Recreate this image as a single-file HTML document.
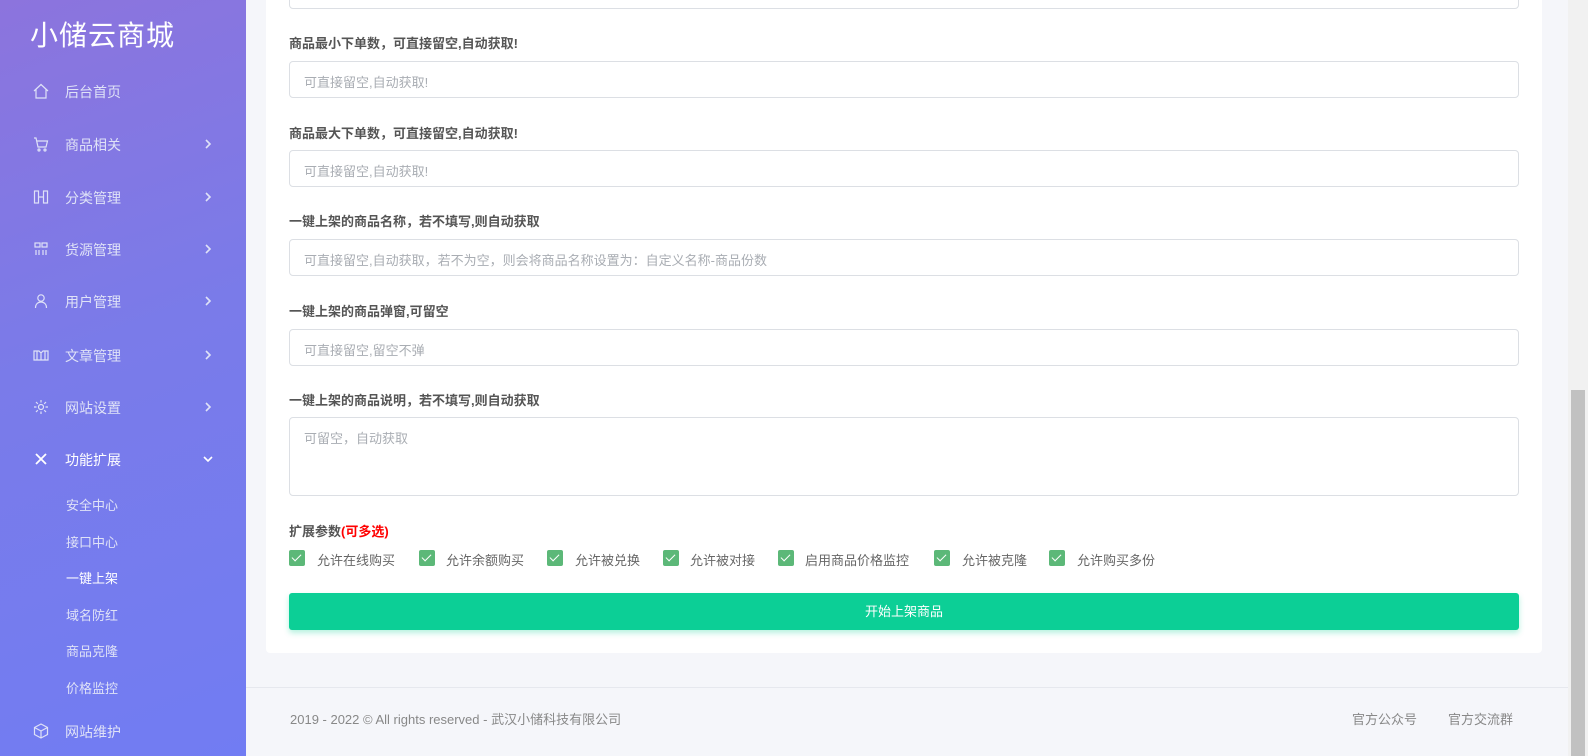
<!DOCTYPE html>
<html><head><meta charset="utf-8"><style>
*{box-sizing:border-box;margin:0;padding:0}
body{width:1588px;height:756px;overflow:hidden;font-family:"Liberation Sans","Noto Sans CJK SC",sans-serif;background:#f5f6fa;position:relative}
.side{position:absolute;left:0;top:0;width:246px;height:756px;background:linear-gradient(160deg,#8c74dd 0%,#7a7be9 45%,#717cf3 100%)}
.logo{position:absolute;left:30px;top:14px;font-size:28px;color:#fff;letter-spacing:1px}
.it{position:absolute;left:0;width:246px;height:20px;color:#dfe2f7;font-size:14px}
.it .ic{position:absolute;left:33px;top:2px;width:16px;height:16px}
.it .t{position:absolute;left:65px;top:1px}
.it .ar{position:absolute;left:202px;top:4px;width:12px;height:12px}
.sub{position:absolute;left:66px;font-size:13px;color:#dfe2f7}
.card{position:absolute;left:266px;top:-10px;width:1276px;height:663px;background:#fff;border-radius:4px}
.lbl{position:absolute;left:289px;font-size:13px;font-weight:bold;color:#555}
.inp{position:absolute;left:289px;width:1230px;height:37px;border:1px solid #dcdfe4;border-radius:4px;font-size:13px;color:#a9adb3;padding:10px 0 0 14px}
.cb{position:absolute;top:550px;width:16px;height:16px;background:#5cb878;border-radius:2px}
.cb::after{content:"";position:absolute;left:5px;top:2px;width:4px;height:8px;border:solid #fff;border-width:0 1.5px 1.5px 0;transform:rotate(45deg)}
.cbl{position:absolute;top:550px;font-size:13px;color:#666}
.btn{position:absolute;left:289px;top:593px;width:1230px;height:37px;background:#0ccf96;border-radius:3px;color:#fff;font-size:13px;text-align:center;line-height:37px;box-shadow:0 3px 6px rgba(12,207,150,.3)}
.foot{position:absolute;left:246px;top:687px;width:1322px;height:69px;border-top:1px solid #e6e8ee;font-size:13px;color:#888}
.scroll{position:absolute;left:1568px;top:0;width:20px;height:756px;background:#f1f1f1}
.thumb{position:absolute;left:1571px;top:390px;width:14px;height:366px;background:#c1c1c1}
</style></head><body>
<div class="side">
<div class="logo">小储云商城</div>
<div class="it" style="top:81px"><svg class="ic" viewBox="0 0 16 16" fill="none" stroke="#dfe2f7" stroke-width="1.2"><path d="M1 8L8 1.5 15 8M3 6.5V15h10V6.5"/></svg><span class="t">后台首页</span></div>
<div class="it" style="top:134px"><svg class="ic" viewBox="0 0 16 16" fill="none" stroke="#dfe2f7" stroke-width="1.2"><path d="M1 2h2l2 9h8l1.5-6H4"/><circle cx="6" cy="14" r="1"/><circle cx="12" cy="14" r="1"/></svg><span class="t">商品相关</span><svg class="ar" viewBox="0 0 12 12" fill="none" stroke="#dfe2f7" stroke-width="1.6"><path d="M4 2l4 4-4 4"/></svg></div>
<div class="it" style="top:187px"><svg class="ic" viewBox="0 0 16 16" fill="none" stroke="#dfe2f7" stroke-width="1.2"><rect x="1.5" y="2" width="4" height="12"/><rect x="10.5" y="2" width="4" height="12"/><path d="M5.5 8h5"/></svg><span class="t">分类管理</span><svg class="ar" viewBox="0 0 12 12" fill="none" stroke="#dfe2f7" stroke-width="1.6"><path d="M4 2l4 4-4 4"/></svg></div>
<div class="it" style="top:239px"><svg class="ic" viewBox="0 0 16 16" fill="none" stroke="#dfe2f7" stroke-width="1.2"><rect x="2" y="2" width="5" height="4"/><rect x="9" y="2" width="5" height="4"/><path d="M3 9v5M6 9v5M10 9v5M13 9v5"/></svg><span class="t">货源管理</span><svg class="ar" viewBox="0 0 12 12" fill="none" stroke="#dfe2f7" stroke-width="1.6"><path d="M4 2l4 4-4 4"/></svg></div>
<div class="it" style="top:291px"><svg class="ic" viewBox="0 0 16 16" fill="none" stroke="#dfe2f7" stroke-width="1.2"><circle cx="8" cy="5" r="3.2"/><path d="M2.5 15c0-4 2.5-6 5.5-6s5.5 2 5.5 6"/></svg><span class="t">用户管理</span><svg class="ar" viewBox="0 0 12 12" fill="none" stroke="#dfe2f7" stroke-width="1.6"><path d="M4 2l4 4-4 4"/></svg></div>
<div class="it" style="top:345px"><svg class="ic" viewBox="0 0 16 16" fill="none" stroke="#dfe2f7" stroke-width="1.2"><path d="M1 13V4h5l2 2 2-2h5v9H1zM8 6v7M4 4v9M12 4v9"/></svg><span class="t">文章管理</span><svg class="ar" viewBox="0 0 12 12" fill="none" stroke="#dfe2f7" stroke-width="1.6"><path d="M4 2l4 4-4 4"/></svg></div>
<div class="it" style="top:397px"><svg class="ic" viewBox="0 0 16 16" fill="none" stroke="#dfe2f7" stroke-width="1.2"><circle cx="8" cy="8" r="2.5"/><path d="M8 1v2.5M8 12.5V15M1 8h2.5M12.5 8H15M3 3l1.8 1.8M11.2 11.2L13 13M13 3l-1.8 1.8M4.8 11.2L3 13"/></svg><span class="t">网站设置</span><svg class="ar" viewBox="0 0 12 12" fill="none" stroke="#dfe2f7" stroke-width="1.6"><path d="M4 2l4 4-4 4"/></svg></div>
<div class="it" style="top:449px;color:#fff"><svg class="ic" viewBox="0 0 16 16" fill="none" stroke="#fff" stroke-width="1.8"><path d="M3 3l10 10M13 3L3 13"/></svg><span class="t">功能扩展</span><svg class="ar" viewBox="0 0 12 12" fill="none" stroke="#fff" stroke-width="1.6"><path d="M2 4l4 4 4-4"/></svg></div>
<div class="sub" style="top:495px">安全中心</div>
<div class="sub" style="top:532px">接口中心</div>
<div class="sub" style="top:568px;color:#fff">一键上架</div>
<div class="sub" style="top:605px">域名防红</div>
<div class="sub" style="top:641px">商品克隆</div>
<div class="sub" style="top:678px">价格监控</div>
<div class="it" style="top:721px"><svg class="ic" viewBox="0 0 16 16" fill="none" stroke="#dfe2f7" stroke-width="1.2"><path d="M8 1l6.5 3.5v7L8 15l-6.5-3.5v-7zM1.5 4.5L8 8l6.5-3.5M8 8v7"/></svg><span class="t">网站维护</span></div>
</div>
<div class="card"></div>
<div class="inp" style="top:-28px"></div>
<div class="lbl" style="top:33px">商品最小下单数，可直接留空,自动获取!</div>
<div class="inp" style="top:61px">可直接留空,自动获取!</div>
<div class="lbl" style="top:123px">商品最大下单数，可直接留空,自动获取!</div>
<div class="inp" style="top:150px">可直接留空,自动获取!</div>
<div class="lbl" style="top:211px">一键上架的商品名称，若不填写,则自动获取</div>
<div class="inp" style="top:239px">可直接留空,自动获取，若不为空，则会将商品名称设置为：自定义名称-商品份数</div>
<div class="lbl" style="top:301px">一键上架的商品弹窗,可留空</div>
<div class="inp" style="top:329px">可直接留空,留空不弹</div>
<div class="lbl" style="top:390px">一键上架的商品说明，若不填写,则自动获取</div>
<div class="inp" style="top:417px;height:79px">可留空，自动获取</div>
<div class="lbl" style="top:521px">扩展参数<span style="color:#f00">(可多选)</span></div>
<div class="cb" style="left:289px"></div><div class="cbl" style="left:317px">允许在线购买</div>
<div class="cb" style="left:419px"></div><div class="cbl" style="left:446px">允许余额购买</div>
<div class="cb" style="left:547px"></div><div class="cbl" style="left:575px">允许被兑换</div>
<div class="cb" style="left:663px"></div><div class="cbl" style="left:690px">允许被对接</div>
<div class="cb" style="left:778px"></div><div class="cbl" style="left:805px">启用商品价格监控</div>
<div class="cb" style="left:934px"></div><div class="cbl" style="left:962px">允许被克隆</div>
<div class="cb" style="left:1049px"></div><div class="cbl" style="left:1077px">允许购买多份</div>
<div class="btn">开始上架商品</div>
<div class="foot"><span style="position:absolute;left:44px;top:21px">2019 - 2022 © All rights reserved - 武汉小储科技有限公司</span><span style="position:absolute;left:1106px;top:21px">官方公众号</span><span style="position:absolute;left:1202px;top:21px">官方交流群</span></div>
<div class="scroll"></div><div class="thumb"></div>
</body></html>
